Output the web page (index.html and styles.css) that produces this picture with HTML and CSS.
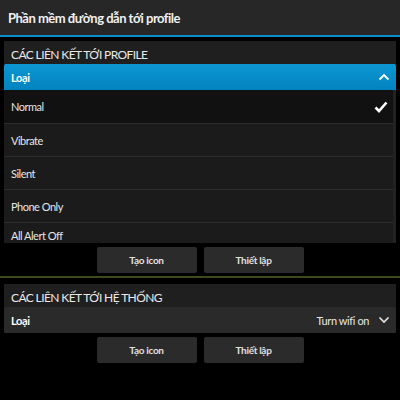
FILE: index.html
```html
<!DOCTYPE html>
<html lang="vi">
<head>
    <meta charset="UTF-8">
    <title>Phần mềm đường dẫn tới profile</title>
    <link rel="stylesheet" href="styles.css">
</head>
<body>

<!-- Title bar -->
<div class="titlebar">Phần mềm đường dẫn tới profile</div>

<!-- Profile links -->
<div class="panel">
    <div class="panel-title">CÁC LIÊN KẾT TỚI PROFILE</div>
    <div class="dropdown open">
        <span class="label">Loại</span>
        <svg class="chevron" width="12" height="8" viewBox="0 0 12 8">
            <polyline points="1.5,6.5 6,2 10.5,6.5" fill="none" stroke="#fff" stroke-width="1.8"/>
        </svg>
    </div>
    <div class="options">
        <div class="option selected">
            <span>Normal</span>
            <svg width="14" height="12" viewBox="0 0 14 12">
                <polyline points="1.5,6.5 5,10 12.5,1.5" fill="none" stroke="#fff" stroke-width="2.6"/>
            </svg>
        </div>
        <div class="option">Vibrate</div>
        <div class="option">Silent</div>
        <div class="option">Phone Only</div>
        <div class="option last">All Alert Off</div>
    </div>
</div>
<div class="actions">
    <button>Tạo icon</button>
    <button>Thiết lập</button>
</div>

<div class="divider"></div>

<!-- System links -->
<div class="panel second">
    <div class="panel-title">CÁC LIÊN KẾT TỚI HỆ THỐNG</div>
    <div class="dropdown">
        <span class="label">Loại</span>
        <span class="value">Turn wifi on</span>
        <svg class="chevron" width="12" height="8" viewBox="0 0 12 8">
            <polyline points="1.5,1.5 6,6 10.5,1.5" fill="none" stroke="#e6e6e6" stroke-width="1.6"/>
        </svg>
    </div>
</div>
<div class="actions">
    <button>Tạo icon</button>
    <button>Thiết lập</button>
</div>

</body>
</html>
```

FILE: styles.css
```css
body {
    margin: 0;
    background-color: #000;
    font-family: 'Lato', 'Open Sans', sans-serif;
    color: #e8e8e8;
    width: 400px;
    height: 400px;
    overflow: hidden;
}

/* Title bar */
.titlebar {
    background-color: #272727;
    border-bottom: 2px solid #0a8fca;
    box-sizing: border-box;
    height: 37px;
    padding: 10px 0 0 8px;
    font-size: 13px;
    font-weight: bold;
    letter-spacing: -0.5px;
    color: #f0f0f0;
}

/* Panels */
.panel {
    margin: 4px 4px 0 4px;
    background-color: #1f1f1f;
}

.panel.second {
    margin-top: 6px;
}

.panel-title {
    height: 23px;
    padding: 6px 0 0 7px;
    box-sizing: border-box;
    font-size: 12px;
    letter-spacing: -0.6px;
    color: #eaeaea;
}

.dropdown {
    height: 26px;
    display: flex;
    align-items: center;
    padding: 0 6px 0 7px;
    background-color: #2a2a2a;
    border-radius: 2px;
    font-size: 11px;
    letter-spacing: -0.4px;
}

.dropdown.open {
    background: linear-gradient(#0c97d2, #0283bf);
    border-radius: 2px 2px 0 0;
}

.dropdown .label {
    font-weight: bold;
    flex: 1;
    color: #fff;
}

.dropdown .value {
    font-size: 11px;
    margin-right: 9px;
    color: #e6e6e6;
}

/* Option list */
.options {
    border-right: 3px solid #222;
}

.option {
    height: 33px;
    display: flex;
    align-items: center;
    justify-content: space-between;
    padding: 0 5px 0 7px;
    font-size: 11px;
    letter-spacing: -0.5px;
    color: #e6e6e6;
    background-color: #1b1b1b;
    border-top: 1px solid #2d2d2d;
    box-sizing: border-box;
}

.option.selected {
    background-color: #111;
    border-top: none;
}

.option.last {
    height: 21px;
    align-items: flex-end;
    padding-bottom: 1px;
}

/* Buttons */
.actions {
    display: flex;
    justify-content: center;
    gap: 7px;
    padding: 4px 0 0 0;
}

.actions button {
    width: 100px;
    height: 26px;
    background-color: #2b2b2b;
    border: none;
    border-radius: 2px;
    color: #e0e0e0;
    font-family: 'Lato', 'Open Sans', sans-serif;
    font-size: 10px;
    font-weight: bold;
    letter-spacing: -0.3px;
    padding: 0;
}

.divider {
    height: 2px;
    margin-top: 3px;
    background-color: #3d4a1c;
}
```
